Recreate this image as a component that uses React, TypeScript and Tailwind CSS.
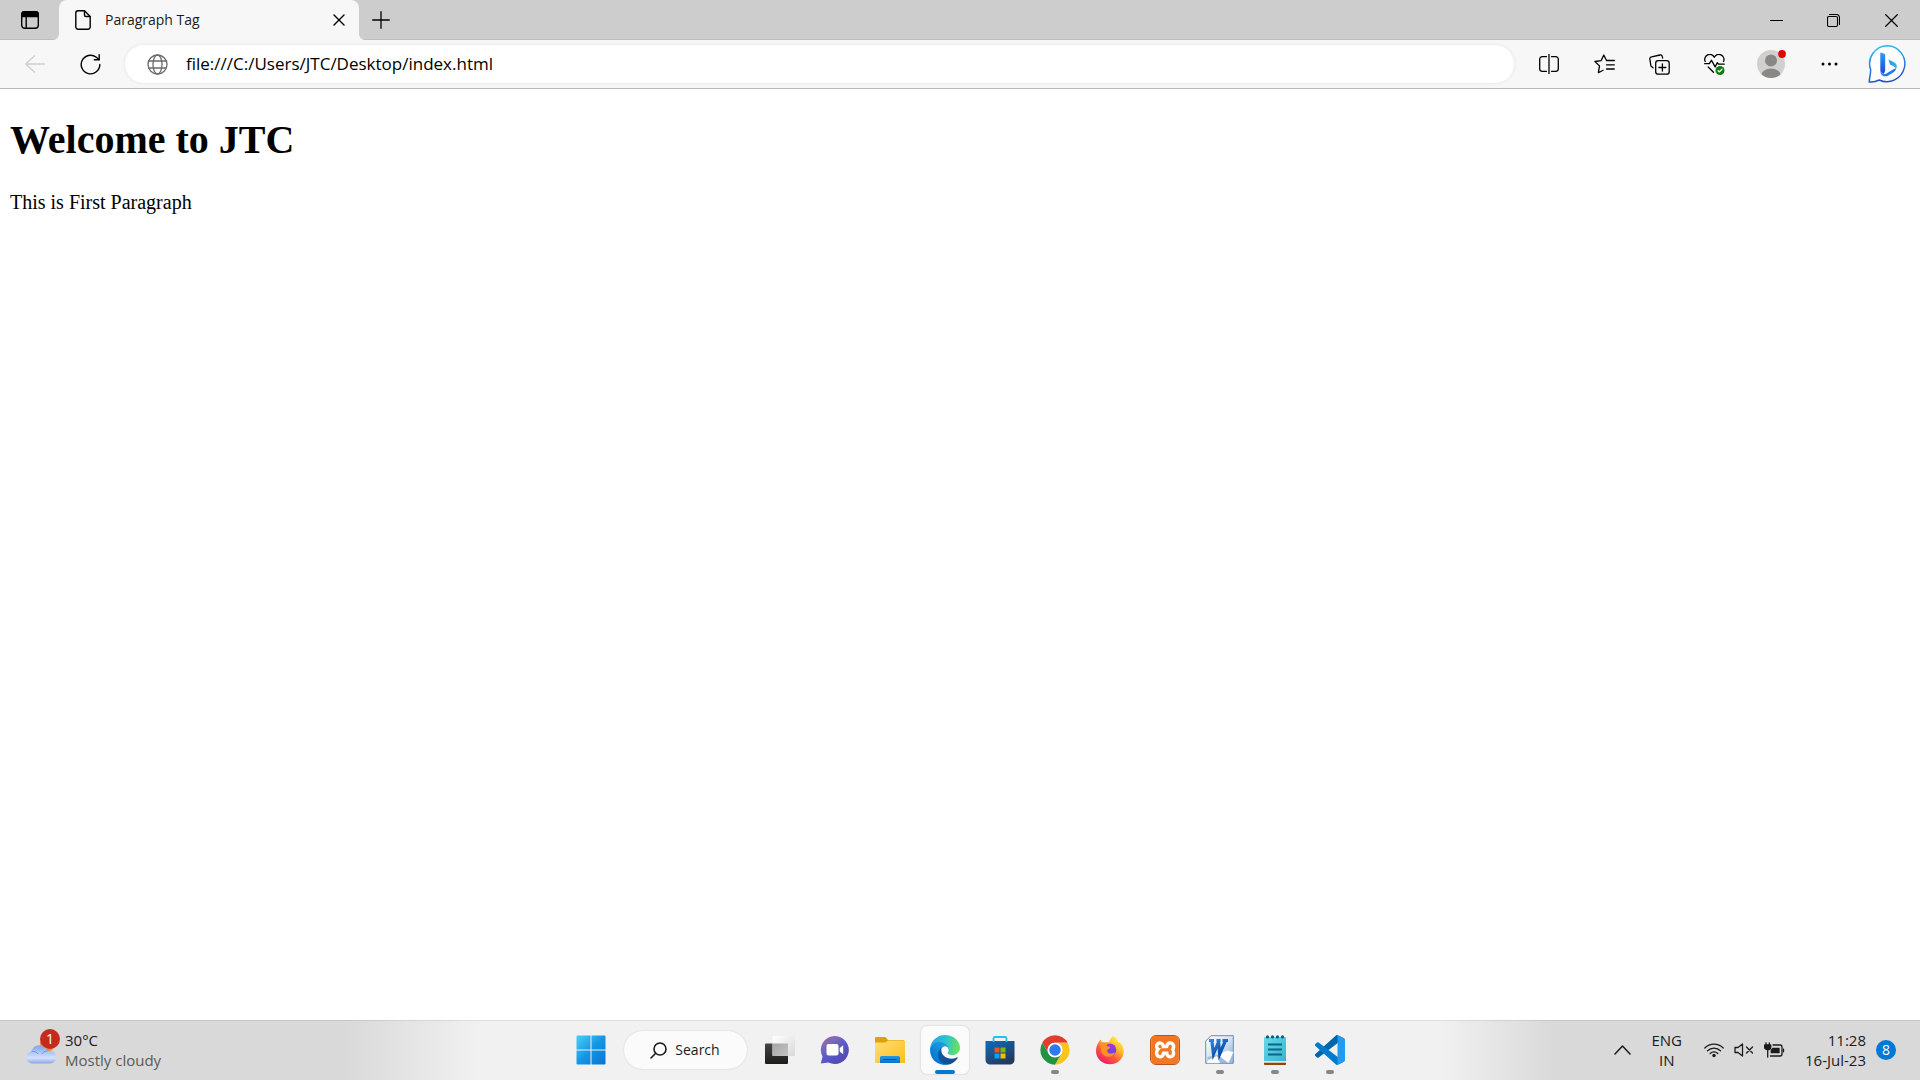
import type { ReactNode } from 'react';
import { SiXampp } from 'react-icons/si';

const stroke = { fill: 'none', stroke: 'currentColor', strokeLinecap: 'round', strokeLinejoin: 'round' } as const;

function ToolButton({ label, children }: { label: string; children: ReactNode }) {
  return (
    <button aria-label={label} className="flex h-10 w-10 items-center justify-center">
      {children}
    </button>
  );
}

function TabStrip() {
  return (
    <header className="flex h-10 bg-[#cdcdcd] shadow-[inset_0_-1px_0_#bdbdbd]">
      <button aria-label="Tab actions" className="flex w-[59px] shrink-0 items-center justify-center">
        <svg width="18" height="18" viewBox="0 0 18 18" {...stroke} strokeWidth="1.4">
          <rect x="0.7" y="0.7" width="16.6" height="16.6" rx="3" />
          <path d="M5.2 5v12" />
          <path d="M3.5 0.5h11a3 3 0 0 1 3 3v2H0.500v-2a3 3 0 0 1 3-3z" fill="black" />
        </svg>
      </button>
      <div className="relative flex w-[300px] items-center rounded-t-lg bg-[#f7f7f7] pr-3 pl-4">
        {/* curved feet of the active tab */}
        <svg className="absolute bottom-0 -left-1.5" width="6" height="6" viewBox="0 0 6 6" fill="#f7f7f7">
          <path d="M6 0v6H0a6 6 0 0 0 6-6z" />
        </svg>
        <svg className="absolute -right-1.5 bottom-0" width="6" height="6" viewBox="0 0 6 6" fill="#f7f7f7">
          <path d="M0 0v6h6a6 6 0 0 1-6-6z" />
        </svg>
        <svg className="shrink-0" width="16" height="20" viewBox="0 0 16 20" {...stroke} strokeWidth="1.4">
          <path d="M3 .8h6.500l5.700 5.700v10.500a2.200 2.200 0 0 1-2.200 2.200H3A2.200 2.200 0 0 1 .8 17V3A2.200 2.200 0 0 1 3 .8z" />
          <path d="M9.500 1v4a1.500 1.500 0 0 0 1.500 1.500h4" />
        </svg>
        <span className="ml-3.5 flex-1 text-sm text-[#1b1b1b]">Paragraph Tag</span>
        <button aria-label="Close tab" className="flex h-6 w-4 items-center justify-center">
          <svg width="12" height="12" viewBox="0 0 12 12" {...stroke} strokeWidth="1.4">
            <path d="M1 1l10 10M11 1L1 11" />
          </svg>
        </button>
      </div>
      <button aria-label="New tab" className="flex w-[43px] items-center justify-center">
        <svg width="18" height="18" viewBox="0 0 18 18" {...stroke} strokeWidth="1.3">
          <path d="M9 .7v16.600M.7 9h16.600" />
        </svg>
      </button>
      <div className="ml-auto flex">
        <button aria-label="Minimize" className="flex w-[57px] items-center justify-center">
          <svg width="13" height="13" viewBox="0 0 13 13" stroke="black" strokeWidth="1">
            <path d="M0 6.500h13" />
          </svg>
        </button>
        <button aria-label="Restore" className="flex w-[57px] items-center justify-center">
          <svg width="13" height="13" viewBox="0 0 13 13" {...stroke} strokeWidth="1.100">
            <rect x=".5" y="2.500" width="10" height="10" rx="1.500" />
            <path d="M2.500.5h7a3 3 0 0 1 3 3v7" />
          </svg>
        </button>
        <button aria-label="Close" className="flex w-[58px] items-center justify-center">
          <svg width="13" height="13" viewBox="0 0 13 13" {...stroke} strokeWidth="1.200">
            <path d="M.5.5l12 12M12.500.5l-12 12" />
          </svg>
        </button>
      </div>
    </header>
  );
}

function Toolbar() {
  return (
    <nav className="flex h-[49px] items-center border-b border-[#b9b9b9] bg-[#f7f7f7] pr-[13px] pl-[15px]">
      <button disabled aria-label="Back" className="flex h-10 w-10 items-center justify-center text-[#cfcfcf]">
        <svg width="20" height="18" viewBox="0 0 20 18" {...stroke} strokeWidth="1.3">
          <path d="M9.500.7L.8 9l8.700 8.300M.8 9h18.700" />
        </svg>
      </button>
      <div className="ml-[15px]">
        <ToolButton label="Refresh">
          <svg width="21" height="21" viewBox="0 0 21 21" {...stroke} strokeWidth="1.4">
            <path d="M19.800 10.500a9.300 9.300 0 1 1-3.500-7.250L19 5.500" />
            <path d="M19.200.8v4.900h-4.900" />
          </svg>
        </ToolButton>
      </div>
      <div className="ml-[15px] flex h-[38px] flex-1 items-center rounded-full bg-white pl-[22px] shadow-[0_0_4px_rgba(0,0,0,0.08)]">
        <svg width="21" height="21" viewBox="0 0 21 21" {...stroke} strokeWidth="1.3" className="text-[#6b6b6b]">
          <circle cx="10.500" cy="10.500" r="9.500" />
          <ellipse cx="10.500" cy="10.500" rx="4.500" ry="9.500" />
          <path d="M1.800 7h17.400M1.800 14h17.400" />
        </svg>
        <input
          aria-label="Address"
          defaultValue="file:///C:/Users/JTC/Desktop/index.html"
          className="ml-[18px] flex-1 bg-transparent text-[17px] text-black outline-none"
        />
      </div>
      <div className="ml-[15px] flex items-center gap-[15px]">
        <ToolButton label="Split screen">
          <svg width="20" height="20" viewBox="0 0 20 20" {...stroke} strokeWidth="1.3">
            <path d="M7.500 2.700H3.200a2.500 2.500 0 0 0-2.500 2.500v9.600a2.500 2.500 0 0 0 2.500 2.500h4.300M12.500 2.700h4.300a2.500 2.500 0 0 1 2.500 2.500v9.600a2.500 2.500 0 0 1-2.500 2.500h-4.300M10 .5v19" />
          </svg>
        </ToolButton>
        <ToolButton label="Favorites">
          <svg width="21" height="20" viewBox="0 0 21 20" {...stroke} strokeWidth="1.3">
            <path d="M12.500 6.500L9.800 1 7.200 6.600.9 7.500l4.600 4.400-1.100 6.800 4.700-2.500M12.500 6.500h7.800M12.500 10.800h7.800M12.500 15h7.800" />
          </svg>
        </ToolButton>
        <ToolButton label="Collections">
          <svg width="21" height="21" viewBox="0 0 21 21" {...stroke} strokeWidth="1.3">
            <rect x="6.700" y="6.700" width="13.500" height="13.500" rx="2.500" />
            <path d="M13.400 10v7M9.900 13.500h7M4 13.800L1.900 12 .9 5.300a2 2 0 0 1 1.700-2.400L11 1a2 2 0 0 1 2.300 1.600l.4 1.500" />
          </svg>
        </ToolButton>
        <ToolButton label="Browser essentials">
          <svg width="21" height="21" viewBox="0 0 21 21" {...stroke} strokeWidth="1.3">
            <path d="M1.200 7.500A4.800 4.800 0 0 1 10.300 3.300a4.800 4.800 0 0 1 9.200 4.200M.7 9.700h4.600l2.200-3.400 3.600 6.600 2.200-4.200 1.300 1.500h5.600M4.200 13l5.300 5.200" />
            <circle cx="16" cy="16.500" r="4.500" fill="#107c10" stroke="none" />
            <path d="M14 16.600l1.400 1.300 2.600-2.600" stroke="white" />
          </svg>
        </ToolButton>
      </div>
      <div className="ml-[17px] flex items-center gap-[18px]">
        <ToolButton label="Profile">
          <svg width="30" height="30" viewBox="0 0 30 30">
            <clipPath id="avatar"><circle cx="15" cy="15" r="14" /></clipPath>
            <g clipPath="url(#avatar)">
              <rect width="30" height="30" fill="#d2d0ce" />
              <circle cx="15" cy="11.500" r="6" fill="#8a8886" />
              <ellipse cx="15" cy="27" rx="10" ry="7.500" fill="#8a8886" />
            </g>
            <circle cx="26" cy="5" r="3.900" fill="#e60000" />
          </svg>
        </ToolButton>
        <ToolButton label="Settings and more">
          <svg width="17" height="4" viewBox="0 0 17 4">
            <circle cx="2" cy="2" r="1.500" /><circle cx="8.500" cy="2" r="1.500" /><circle cx="15" cy="2" r="1.500" />
          </svg>
        </ToolButton>
        <button aria-label="Bing">
          <BingLogo />
        </button>
      </div>
    </nav>
  );
}

function BingLogo() {
  return (
    <svg width="40" height="40" viewBox="0 0 40 40">
      <defs>
        <linearGradient id="bubble" x1="0" y1="0" x2="0.200" y2="1">
          <stop offset="0" stopColor="#2fc4ee" />
          <stop offset="0.500" stopColor="#2b8cec" />
          <stop offset="1" stopColor="#2350c8" />
        </linearGradient>
        <linearGradient id="bingStem" x1="0" y1="0" x2="0" y2="1">
          <stop offset="0" stopColor="#2f9cf4" />
          <stop offset="1" stopColor="#1b48d8" />
        </linearGradient>
        <linearGradient id="bingBowl" x1="1" y1="0" x2="0" y2="1">
          <stop offset="0" stopColor="#35dfc4" />
          <stop offset="0.500" stopColor="#2aa7ee" />
          <stop offset="1" stopColor="#2060e0" />
        </linearGradient>
      </defs>
      <path d="M20.500 1.700a18 18 0 1 1-8.300 34.300c-3.600 1.900-6.600 2.300-9.900 2 0-4.500 1.600-8 1.300-12.500A18 18 0 0 1 20.500 1.700z" fill="white" stroke="url(#bubble)" strokeWidth="1.500" />
      <path d="M14 8.500l3.200 1.300c.8.300 1 .9 1 1.700v15.200l-1.300 3.100c-2 0-3.600-1.700-3.600-4V9z" fill="url(#bingStem)" />
      <path d="M21.500 15.500l5.200 2.400c3 1.400 3.700 3.600 2.700 6.600l-3-2.600-3.400-1.300z" fill="url(#bingBowl)" />
      <path d="M13.500 26.500c.5 3 2.900 4.600 5.500 3.300l7-4.200 3.400-1.500c-.6 2.500-2 3.800-4 5l-4 2.300c-4.400 2.500-8.600-.4-7.900-4.900z" fill="#2476ea" />
    </svg>
  );
}

function TaskIcon({ label, active, running, children }: { label: string; active?: boolean; running?: boolean; children: ReactNode }) {
  return (
    <button
      aria-label={label}
      className={
        active
          ? 'relative flex h-12 w-12 items-center justify-center rounded-md bg-[#fbfbfb] shadow-[0_0_2px_rgba(0,0,0,0.2)]'
          : 'relative flex h-12 w-12 items-center justify-center'
      }
    >
      {children}
      {active && <span className="absolute bottom-0 h-1 w-5 rounded-full bg-[#0078d4]" />}
      {running && <span className="absolute bottom-0 h-1 w-2 rounded-full bg-[#868686]" />}
    </button>
  );
}

function StartIcon() {
  return (
    <svg width="30" height="30" viewBox="0 0 30 30">
      <defs>
        <linearGradient id="start" gradientUnits="userSpaceOnUse" x1="0" y1="0" x2="30" y2="30">
          <stop offset="0" stopColor="#4fd0fb" />
          <stop offset="0.500" stopColor="#1496e4" />
          <stop offset="1" stopColor="#0873d2" />
        </linearGradient>
      </defs>
      <g fill="url(#start)">
        <path d="M1.500.5H14.500v14H.5V1.500a1 1 0 0 1 1-1zM15.500.5h13a1 1 0 0 1 1 1V14.500h-14zM.5 15.500H14.500v14H1.500a1 1 0 0 1-1-1zM15.500 15.500h14v13a1 1 0 0 1-1 1h-13z" />
      </g>
    </svg>
  );
}

function TaskViewIcon() {
  return (
    <svg width="30" height="30" viewBox="0 0 30 30">
      <defs>
        <linearGradient id="viewBack" x2="0" y2="1"><stop stopColor="#454542" /><stop offset="1" stopColor="#1c1c1b" /></linearGradient>
        <linearGradient id="viewFront" x2="1" y2="1"><stop stopColor="#ffffff" /><stop offset="1" stopColor="#d9d9d9" /></linearGradient>
        <linearGradient id="viewMid" x2="1" y2="1"><stop stopColor="#a5a5a5" /><stop offset="1" stopColor="#c4c4c4" /></linearGradient>
      </defs>
      <rect x="0" y="8.500" width="23" height="20.500" rx="1" fill="url(#viewBack)" />
      <rect x="7.500" y="1" width="22.500" height="20" rx="1" fill="url(#viewFront)" />
      <path d="M7.500 8.500H23V21H7.500z" fill="url(#viewMid)" />
    </svg>
  );
}

function ChatIcon() {
  return (
    <svg width="30" height="30" viewBox="0 0 30 30">
      <defs>
        <linearGradient id="chat" x1="0" y1="0" x2="0.700" y2="1">
          <stop offset="0" stopColor="#a5629c" />
          <stop offset="0.300" stopColor="#7f69b9" />
          <stop offset="0.600" stopColor="#5a59c9" />
          <stop offset="1" stopColor="#5346b5" />
        </linearGradient>
      </defs>
      <path d="M15 1a14 14 0 1 1-6.500 26.500L.8 28.500l1.700-6.800A14 14 0 0 1 15 1z" fill="url(#chat)" />
      <rect x="6.500" y="9" width="12" height="11.500" rx="2" fill="white" />
      <path d="M19.700 13l3.500-2.700v9L19.700 16.600z" fill="white" />
    </svg>
  );
}

function FolderIcon() {
  return (
    <svg width="30" height="28" viewBox="0 0 30 28">
      <defs>
        <linearGradient id="folder" x2="1" y2="1"><stop stopColor="#ffdf75" /><stop offset="1" stopColor="#fbbd1c" /></linearGradient>
        <linearGradient id="folderPocket" x2="0" y2="1"><stop stopColor="#1f9be8" /><stop offset="1" stopColor="#0f6fc5" /></linearGradient>
      </defs>
      <path d="M1 1h9.500l2.500 3h16v5H0V2a1 1 0 0 1 1-1z" fill="#e0a108" />
      <path d="M0 6.500h10.500L13 4.500h16a1 1 0 0 1 1 1V27H0z" fill="url(#folder)" />
      <path d="M5 27v-5.500a1.500 1.500 0 0 1 1.500-1.500h17a1.500 1.500 0 0 1 1.500 1.500V27z" fill="url(#folderPocket)" />
      <path d="M9 23.500h12" stroke="#0b4c94" strokeWidth="1.200" strokeLinecap="round" />
    </svg>
  );
}

function EdgeIcon() {
  return (
    <svg width="30" height="30" viewBox="0 0 256 256">
      <defs>
        <linearGradient id="edgeA" gradientUnits="userSpaceOnUse" x1="63" y1="177" x2="242" y2="177">
          <stop stopColor="#0c59a4" /><stop offset="1" stopColor="#114a8b" />
        </linearGradient>
        <linearGradient id="edgeB" gradientUnits="userSpaceOnUse" x1="157" y1="100" x2="45" y2="220">
          <stop stopColor="#1b9de2" /><stop offset="0.400" stopColor="#1290df" /><stop offset="1" stopColor="#0078d4" />
        </linearGradient>
        <linearGradient id="edgeC" gradientUnits="userSpaceOnUse" x1="20" y1="60" x2="245" y2="100">
          <stop stopColor="#29a9df" /><stop offset="0.500" stopColor="#2dc3d0" /><stop offset="1" stopColor="#66e25a" />
        </linearGradient>
      </defs>
      <path d="M231 190.500c-3.400 1.800-6.900 3.400-10.500 4.700a102 102 0 0 1-35.900 6.500c-47.300 0-88.500-32.500-88.500-74.300 0-11.400 6.400-21.900 16.400-27.300-42.800 1.800-53.800 46.400-53.800 72.500 0 74 68.100 81.400 82.800 81.400 7.900 0 19.800-2.300 27-4.600l1.300-.4a128.300 128.300 0 0 0 66.600-52.800 4 4 0 0 0-5.400-5.700z" fill="url(#edgeA)" />
      <path d="M105.700 241.400a79.200 79.200 0 0 1-22.700-21.300 80.700 80.700 0 0 1 29.500-120c3.100-1.400 8.500-4.100 15.600-4a32.400 32.400 0 0 1 25.700 13 31.900 31.900 0 0 1 6.300 18.700c0-.2 24.500-79.600-80-79.600-43.900 0-80 41.600-80 78.200a130 130 0 0 0 12.100 56 128 128 0 0 0 156.400 67 75.500 75.500 0 0 1-62.800-8z" fill="url(#edgeB)" />
      <path d="M152.300 148.900c-.8 1-3.300 2.500-3.300 5.700 0 2.600 1.700 5.100 4.700 7.200 14.400 10 41.500 8.700 41.600 8.700 10.700 0 21.100-2.900 30.300-8.300a61.400 61.400 0 0 0 30.400-52.900c.3-22.400-8-37.300-11.300-43.900C223.500 23.900 177.700 0 128 0A128 128 0 0 0 0 126.200c.5-36.500 36.800-66 80-66 3.500 0 23.500.3 42 10.100 16.300 8.500 24.900 18.900 30.800 29.200 6.200 10.700 7.300 24.100 7.300 29.500s-2.700 13.300-7.800 19.900z" fill="url(#edgeC)" />
    </svg>
  );
}

function StoreIcon() {
  return (
    <svg width="30" height="30" viewBox="0 0 30 30">
      <defs>
        <linearGradient id="store" x2="0.600" y2="1"><stop stopColor="#0f6cbd" /><stop offset="1" stopColor="#243a5e" /></linearGradient>
      </defs>
      <path d="M.5 6h29v19a4.500 4.500 0 0 1-4.500 4.500H5A4.500 4.500 0 0 1 .5 25z" fill="url(#store)" />
      <path d="M8.500 7V3.500a1.500 1.500 0 0 1 1.500-1.500h10a1.500 1.500 0 0 1 1.500 1.500V7" fill="none" stroke="#29bdf0" strokeWidth="1.800" />
      <path d="M9.500 12.500h5v5h-5z" fill="#f25022" /><path d="M15.500 12.500h5v5h-5z" fill="#7fba00" />
      <path d="M9.500 18.500h5v5h-5z" fill="#00a4ef" /><path d="M15.500 18.500h5v5h-5z" fill="#ffb900" />
    </svg>
  );
}

function ChromeIcon() {
  return (
    <svg width="30" height="30" viewBox="0 0 48 48">
      <circle cx="24" cy="24" r="23.500" fill="white" />
      <path d="M3.650 12.250A23.500 23.500 0 0 1 44.350 12.250H24a11.750 11.750 0 0 0-10.180 17.630z" fill="#e33b2e" />
      <path d="M44.350 12.250A23.500 23.500 0 0 1 24 47.500l10.180-17.620A11.750 11.750 0 0 0 24 12.250z" fill="#fcc31e" />
      <path d="M24 47.500A23.500 23.500 0 0 1 3.650 12.250l10.170 17.630a11.750 11.750 0 0 0 20.360 0z" fill="#229342" />
      <circle cx="24" cy="24" r="11.700" fill="white" />
      <circle cx="24" cy="24" r="9.200" fill="#2f7bed" />
    </svg>
  );
}

function FirefoxIcon() {
  return (
    <svg width="30" height="30" viewBox="0 0 30 30">
      <defs>
        <linearGradient id="fox" x1="0.850" y1="0.100" x2="0.250" y2="0.950">
          <stop stopColor="#fff04a" /><stop offset="0.350" stopColor="#ffb52a" /><stop offset="0.650" stopColor="#ff5a36" /><stop offset="1" stopColor="#ee1a6c" />
        </linearGradient>
        <linearGradient id="foxGlobe" x2="0" y2="1"><stop stopColor="#a735e8" /><stop offset="1" stopColor="#5b4ad4" /></linearGradient>
      </defs>
      <path d="M18 1c3.500 1.800 4.500 4 5 5.500 1 .3 1.800.8 2.500 1.500 2.500 3 3.500 6 3.200 9.500C28 24.500 22 29.300 15 29.300 7.300 29.300 1 23.500 1 16c0-4 1.500-7.500 3.200-9.500L5.500 4.500 7 7.500c1-.3 2-.3 3 0L14 7c1.200-2.500 2-4.300 4-6z" fill="url(#fox)" />
      <circle cx="15" cy="14.800" r="6.300" fill="url(#foxGlobe)" />
      <path d="M4.800 8c2-.8 4-.7 5.200.1 2.200-.8 3.800-.3 4.500.4-2.200.6-3 1.500-2.800 2.600l3.500.8c0 1-.8 1.800-2.500 2.500-.8 1.500-.5 3 1 3.800 2.300 1 4.500-.5 6.300-.4-1.500 2.500-3.500 4-6.500 4-4.500 0-7.500-3.500-7.500-7z" fill="#ff9128" />
    </svg>
  );
}

function XamppIcon() {
  return (
    <span className="flex h-[30px] w-[30px] items-center justify-center rounded-md border border-[#b5561c] bg-white">
      <SiXampp className="h-7 w-7 text-[#f37623]" />
    </span>
  );
}

function WordIcon() {
  return (
    <svg width="30" height="30" viewBox="0 0 30 30">
      <defs>
        <linearGradient id="wordSheet" x2="1" y2="1"><stop stopColor="#ffffff" /><stop offset="0.500" stopColor="#d5e2f5" /><stop offset="1" stopColor="#86a7d8" /></linearGradient>
        <linearGradient id="wordMark" x2="1" y2="1"><stop stopColor="#2e8be0" /><stop offset="1" stopColor="#073c91" /></linearGradient>
      </defs>
      <path d="M6 .7h22.300v27.600H.7V6z" fill="url(#wordSheet)" stroke="#6c89b8" />
      <path d="M2.500 22l25-5v11h-25z" fill="#9bb8e2" />
      <path d="M2 28l1-3 9-4 3 7zM13 20l9-4.500 6.500 1.500-5 11z" fill="white" stroke="#c9d5e8" strokeWidth=".4" />
      <path d="M4 5.500h5M11.500 5.500h4M17.500 5.500h5.500M6.800 5.500l1.700 13.500 5-12 1.200 12L20.500 5.500" fill="none" stroke="url(#wordMark)" strokeWidth="3.200" />
    </svg>
  );
}

function NotepadIcon() {
  return (
    <svg width="24" height="30" viewBox="0 0 24 30">
      <defs>
        <linearGradient id="note" x2="1" y2="1"><stop stopColor="#6ad9ea" /><stop offset="1" stopColor="#37b4d0" /></linearGradient>
      </defs>
      <path d="M1 27.500h22V29a1 1 0 0 1-1 1H2a1 1 0 0 1-1-1z" fill="#944609" />
      <path d="M1 25h22v2.500H1z" fill="#e9e3dc" />
      <path d="M1 3a1 1 0 0 1 1-1h20a1 1 0 0 1 1 1v23H1z" fill="url(#note)" />
      <g fill="#0a5c7c">
        <circle cx="4.500" cy="1.900" r="1.600" /><circle cx="9.500" cy="1.900" r="1.600" /><circle cx="14.500" cy="1.900" r="1.600" /><circle cx="19.500" cy="1.900" r="1.600" />
      </g>
      <path d="M5 9.500h14M5 14.500h14M5 19.500h14" stroke="#0b6688" strokeWidth="1.800" />
    </svg>
  );
}

function CodeIcon() {
  return (
    <svg width="30" height="30" viewBox="0 0 100 100">
      <path d="M96.500 10.800L75.900.9a6.200 6.200 0 0 0-7.100 1.200L1.300 63.600a4.200 4.200 0 0 0 0 6.200l5.500 5a4.200 4.200 0 0 0 5.400.2l81.200-61.700A4.100 4.100 0 0 1 100 16.600v-.2a6.200 6.200 0 0 0-3.500-5.600z" fill="#0065a9" />
      <path d="M96.500 89.200l-20.600 9.900a6.200 6.200 0 0 1-7.100-1.200L1.300 36.400a4.200 4.200 0 0 1 0-6.200l5.500-5a4.200 4.200 0 0 1 5.400-.2l81.200 61.700a4.100 4.100 0 0 0 6.600-3.300v.2a6.200 6.200 0 0 1-3.500 5.600z" fill="#007acc" />
      <path d="M75.900 99.100a6.200 6.200 0 0 1-7.100-1.200c2.300 2.300 6.200.7 6.200-2.600V4.700c0-3.300-3.900-4.900-6.200-2.600a6.200 6.200 0 0 1 7.100-1.200l20.600 9.900a6.200 6.200 0 0 1 3.500 5.600v67.200a6.200 6.200 0 0 1-3.500 5.600z" fill="#1f9cf0" />
    </svg>
  );
}

function WeatherIcon() {
  return (
    <svg width="30" height="24" viewBox="0 0 30 24">
      <defs>
        <linearGradient id="cloud" x2="0" y2="1"><stop stopColor="#7da4ec" /><stop offset="0.700" stopColor="#d5e2fb" /><stop offset="1" stopColor="#8aa6e8" /></linearGradient>
      </defs>
      <circle cx="21.500" cy="2" r="7.500" fill="#f58a1c" />
      <path d="M6 21.500a6 6 0 0 1-.8-11.900A8.500 8.500 0 0 1 21.500 9 6.500 6.500 0 1 1 23.500 21.500z" fill="url(#cloud)" />
      <path d="M5.500 9.500c3-.5 5 .5 6.500 2.500M21.500 9c-2.500 0-4.500 1-5.500 3" fill="none" stroke="#7396e0" strokeWidth="1" />
    </svg>
  );
}

const pinnedApps = [
  { label: 'Task View', icon: <TaskViewIcon /> },
  { label: 'Chat', icon: <ChatIcon /> },
  { label: 'File Explorer', icon: <FolderIcon /> },
  { label: 'Microsoft Edge', icon: <EdgeIcon />, active: true },
  { label: 'Microsoft Store', icon: <StoreIcon /> },
  { label: 'Google Chrome', icon: <ChromeIcon />, running: true },
  { label: 'Firefox', icon: <FirefoxIcon /> },
  { label: 'XAMPP', icon: <XamppIcon /> },
  { label: 'Word', icon: <WordIcon />, running: true },
  { label: 'Notepad', icon: <NotepadIcon />, running: true },
  { label: 'Visual Studio Code', icon: <CodeIcon />, running: true },
];

function Taskbar() {
  return (
    <footer className="grid h-[60px] grid-cols-[1fr_auto_1fr] items-center bg-[linear-gradient(to_right,#d9d9d9_18%,#f1f1f1_25%,#f1f1f1_75%,#d9d9d9_81%)] text-[15px] leading-5 text-[#1b1b1b] shadow-[inset_0_1px_0_rgba(0,0,0,0.08)]">
      <button className="flex items-center justify-self-start pl-[26px] text-left">
        <span className="relative pt-2">
          <WeatherIcon />
          <span className="absolute -top-[5px] left-3.5 flex h-5 w-5 items-center justify-center rounded-full bg-[#c42b1c] text-sm text-white">1</span>
        </span>
        <span className="ml-[9px]">
          <span className="block">30°C</span>
          <span className="block text-[#5a5a5a]">Mostly cloudy</span>
        </span>
      </button>

      <div className="flex items-center gap-[7px]">
        <TaskIcon label="Start"><StartIcon /></TaskIcon>
        <button className="mr-0.5 ml-0.5 flex h-[38px] w-[123px] items-center justify-center gap-2 rounded-full bg-[#fbfbfb] text-sm shadow-[0_0_2px_rgba(0,0,0,0.15)]">
          <svg width="17" height="17" viewBox="0 0 17 17" {...stroke} strokeWidth="1.600">
            <circle cx="10" cy="7" r="6" /><path d="M5.700 11.300L1 16" />
          </svg>
          Search
        </button>
        {pinnedApps.map((app) => (
          <TaskIcon key={app.label} label={app.label} active={app.active} running={app.running}>
            {app.icon}
          </TaskIcon>
        ))}
      </div>

      <div className="flex items-center justify-self-end pr-6">
        <button aria-label="Show hidden icons" className="mr-5">
          <svg width="17" height="10" viewBox="0 0 17 10" {...stroke} strokeWidth="1.500"><path d="M1 9l7.500-8L16 9" /></svg>
        </button>
        <button className="text-center">
          <span className="block">ENG</span>
          <span className="block">IN</span>
        </button>
        <button aria-label="Quick settings" className="ml-[22px] flex items-center gap-2.5">
          <svg width="20" height="16" viewBox="0 0 20 16" {...stroke} strokeWidth="1.300">
            <path d="M.8 6a13 13 0 0 1 18.400 0M3.500 8.800a9.200 9.200 0 0 1 13 0M6.200 11.500a5.400 5.400 0 0 1 7.600 0" />
            <circle cx="10" cy="13.500" r="1.700" fill="currentColor" stroke="none" />
          </svg>
          <svg width="20" height="14" viewBox="0 0 20 14" {...stroke} strokeWidth="1.300">
            <path d="M1 4.500h3L8.500.9v12.200L4 9.500H1zM12.500 4l6 6M18.500 4l-6 6" />
          </svg>
          <svg width="21" height="16" viewBox="0 0 21 16" {...stroke} strokeWidth="1.300">
            <path d="M9 3h7a2 2 0 0 1 2 2v7a2 2 0 0 1-2 2H6.500" />
            <path d="M8.800 6.300h6.200v4.400H7.300V8.500zM19.500 7.200v2.600" fill="currentColor" />
            <path d="M.7 3h6v2.500a2 2 0 0 1-2 2h-2a2 2 0 0 1-2-2zM2 .8V3M5.300.8V3" fill="currentColor" />
            <path d="M3.700 8v7" />
          </svg>
        </button>
        <button className="ml-5 flex items-center gap-2.5 text-right">
          <span>
            <span className="block">11:28</span>
            <span className="block">16-Jul-23</span>
          </span>
          <span className="flex h-5 w-5 items-center justify-center rounded-full bg-[#0078d4] text-sm text-white">8</span>
        </button>
      </div>
    </footer>
  );
}

export default function App() {
  return (
    <div className="flex min-h-screen flex-col bg-white font-['Open_Sans','Noto_Sans',sans-serif] text-black">
      <TabStrip />
      <Toolbar />
      <main className="flex-1 px-2.5 pt-7 font-['Liberation_Serif',serif]">
        <h1 className="text-[40px] leading-[46px] font-bold">Welcome to JTC</h1>
        <p className="mt-[27px] text-xl leading-6">This is First Paragraph</p>
      </main>
      <Taskbar />
    </div>
  );
}
